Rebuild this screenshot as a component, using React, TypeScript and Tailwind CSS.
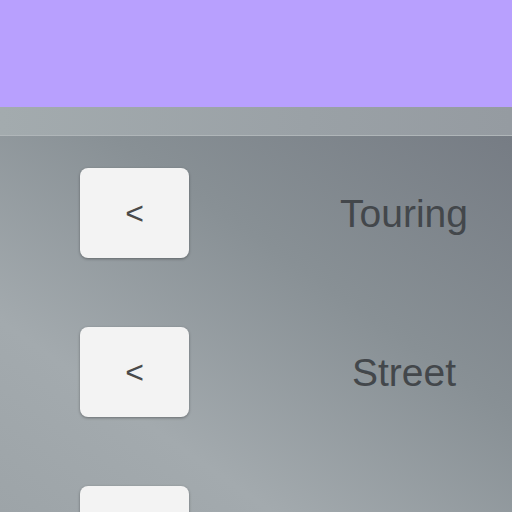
const rows = ['Touring', 'Street', ''];

function Row({ label }: { label: string }) {
  return (
    <div className="flex items-center h-[90px] shrink-0">
      <button className="ml-[80px] w-[109px] h-[90px] rounded-[8px] bg-[#f3f3f3] shadow-[0_1px_3px_rgba(0,0,0,0.35)] flex items-center justify-center text-[32px] text-[#4a4a4a] font-['Liberation_Sans',sans-serif]">
        &lt;
      </button>
      <div className="ml-[115px] w-[200px] text-center text-[39px] text-[#43474b] font-['Liberation_Sans',sans-serif] leading-none">
        {label}
      </div>
    </div>
  );
}

export default function App() {
  return (
    <div className="w-[512px] h-[512px] overflow-hidden flex flex-col">
      <div className="h-[107px] shrink-0 bg-[#b8a0fe]" />
      <div className="h-[29px] shrink-0 bg-[linear-gradient(90deg,#a3abae,#9aa1a6_60%,#959ba1)] border-b border-[#b0b6b9]" />
      <div className="flex-1 flex flex-col gap-[69px] pt-[32px] bg-[linear-gradient(215deg,#767c84_0%,#889095_35%,#a3aaae_68%,#9ba2a6_100%)]">
        {rows.map((r, i) => (
          <Row key={i} label={r} />
        ))}
      </div>
    </div>
  );
}
